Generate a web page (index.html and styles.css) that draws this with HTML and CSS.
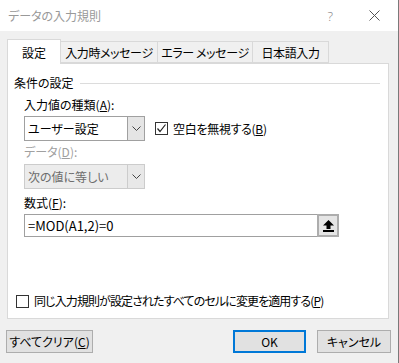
FILE: index.html
```html
<!DOCTYPE html>
<html lang="ja">
<head>
  <meta charset="UTF-8" />
  <title>データの入力規則</title>
  <link rel="stylesheet" href="styles.css">
</head>
<body>
<div class="window">
  <div class="titlebar">
    <span class="title">データの入力規則</span>
    <span class="help">?</span>
    <span class="close">
      <svg width="11" height="11" viewBox="0 0 11 11"><path d="M0.5 0.5 L10.5 10.5 M10.5 0.5 L0.5 10.5" stroke="#555" stroke-width="1" fill="none"/></svg>
    </span>
  </div>

  <div class="tabs">
    <div class="tab active" style="width:54px">設定</div>
    <div class="tab" style="width:97px">入力時メッセージ</div>
    <div class="tab" style="width:95px">エラー メッセージ</div>
    <div class="tab" style="width:76px">日本語入力</div>
  </div>

  <div class="panel">
    <div class="group-head">
      <span>条件の設定</span>
      <span class="rule"></span>
    </div>

    <div class="label">入力値の種類(<u>A</u>):</div>
    <div class="row">
      <div class="select">
        <span class="value">ユーザー設定</span>
        <span class="arrow"><svg width="9" height="5" viewBox="0 0 9 5"><path d="M0.5 0.5 L4.5 4.5 L8.5 0.5" stroke="#444" fill="none"/></svg></span>
      </div>
      <label class="check">
        <span class="box"><svg width="11" height="11" viewBox="0 0 11 11"><path d="M1.5 5.5 L4 8.5 L9.5 1.5" stroke="#222" stroke-width="1.2" fill="none"/></svg></span>
        空白を無視する(<u>B</u>)
      </label>
    </div>

    <div class="label disabled">データ(<u>D</u>):</div>
    <div class="row">
      <div class="select off">
        <span class="value">次の値に等しい</span>
        <span class="arrow"><svg width="9" height="5" viewBox="0 0 9 5"><path d="M0.5 0.5 L4.5 4.5 L8.5 0.5" stroke="#444" fill="none"/></svg></span>
      </div>
    </div>

    <div class="label">数式(<u>F</u>):</div>
    <div class="row">
      <div class="formula">=MOD(A1,2)=0</div>
      <div class="pick">
        <svg width="11" height="12" viewBox="0 0 11 12"><path d="M5.5 0 L11 5.5 L7.5 5.5 L7.5 9 L3.5 9 L3.5 5.5 L0 5.5 Z" fill="#000"/><rect x="0" y="10" width="11" height="2" fill="#000"/></svg>
      </div>
    </div>

    <label class="check bottom">
      <span class="box"></span>
      <span class="tight">同じ入力規則が設定されたすべてのセルに変更を適用する(<u>P</u>)</span>
    </label>
  </div>

  <div class="buttons">
    <button class="btn clear">すべてクリア(<u>C</u>)</button>
    <span class="spacer"></span>
    <button class="btn ok">OK</button>
    <button class="btn cancel">キャンセル</button>
  </div>
</div>
</body>
</html>
```

FILE: styles.css
```css
body {
  margin: 0;
  font-family: "Noto Sans CJK JP", "Noto Sans", sans-serif;
  font-feature-settings: "palt";
  font-size: 12px;
  color: #000;
  background-color: #f0f0f0;
}
.window {
  width: 398px;
  height: 363px;
  border-right: 1px solid #7a7a7a;
  background-color: #f0f0f0;
}
.titlebar {
  height: 31px;
  background-color: #fff;
  display: flex;
  align-items: center;
  padding-left: 8px;
}
.title {
  color: #999;
  flex: 1;
}
.help {
  color: #888;
  font-family: "Noto Sans", sans-serif;
  font-weight: 300;
  font-size: 13px;
  margin-right: 36px;
}
.close {
  display: flex;
  margin-right: 18px;
}
.tabs {
  display: flex;
  align-items: flex-end;
  padding: 8px 0 0 7px;
  height: 24px;
  position: relative;
  z-index: 1;
}
.tab {
  height: 22px;
  line-height: 21px;
  text-align: center;
  box-sizing: border-box;
  border: 1px solid #d9d9d9;
  border-left: none;
  background-color: #f0f0f0;
  white-space: nowrap;
  letter-spacing: -0.4px;
}
.tab.active {
  height: 25px;
  line-height: 25px;
  margin-bottom: -1px;
  background-color: #fff;
  border-left: 1px solid #d9d9d9;
  border-bottom: none;
  letter-spacing: 0;
}
.panel {
  margin: 0 9px 0 7px;
  height: 256px;
  box-sizing: border-box;
  border: 1px solid #d9d9d9;
  background-color: #fff;
  display: flex;
  flex-direction: column;
  padding: 11px 8px 9px 6px;
}
.group-head {
  display: flex;
  align-items: center;
  height: 16px;
  line-height: 16px;
}
.rule {
  flex: 1;
  border-top: 1px solid #dcdcdc;
  margin-left: 6px;
  margin-top: 1px;
}
.label {
  margin: 6px 0 0 10px;
  line-height: 16px;
}
.label.disabled {
  color: #a0a0a0;
  margin-top: 3px;
}
.row {
  display: flex;
  align-items: center;
  margin: 3px 0 0 10px;
}
.select {
  width: 121px;
  height: 25px;
  box-sizing: border-box;
  border: 1px solid #a0a0a0;
  display: flex;
  background-color: #fff;
}
.select .value {
  flex: 1;
  line-height: 23px;
  padding-left: 3px;
}
.select .arrow {
  width: 16px;
  background-color: #e5e5e5;
  border-left: 1px solid #a0a0a0;
  display: flex;
  align-items: center;
  justify-content: center;
}
.select.off {
  background-color: #ececec;
  border-color: #cccccc;
  color: #6d6d6d;
  margin-top: 1px;
}
.select.off .arrow {
  border-left-color: #cccccc;
  background-color: #e8e8e8;
}
.check {
  display: flex;
  align-items: center;
  margin-left: 10px;
  line-height: 16px;
  letter-spacing: -0.3px;
}
.box {
  width: 11px;
  height: 11px;
  border: 1px solid #333;
  background-color: #fff;
  margin-right: 5px;
  display: flex;
}
.tight {
  letter-spacing: -0.9px;
}
.formula {
  width: 293px;
  height: 23px;
  box-sizing: border-box;
  border: 1px solid #a0a0a0;
  border-right: none;
  font-size: 13px;
  line-height: 21px;
  padding-left: 3px;
}
.pick {
  width: 22px;
  height: 23px;
  box-sizing: border-box;
  border: 2px solid #adadad;
  background-color: #e5e5e5;
  display: flex;
  align-items: center;
  justify-content: center;
}
.check.bottom {
  margin: auto 0 0 2px;
}
.buttons {
  display: flex;
  padding: 11px 0 0 6px;
}
.spacer {
  flex: 1;
}
.btn {
  height: 23px;
  box-sizing: border-box;
  background-color: #e1e1e1;
  border: 1px solid #adadad;
  font-family: inherit;
  font-feature-settings: "palt";
  font-size: 12px;
  padding: 0;
  color: #000;
}
.btn.clear {
  width: 87px;
}
.btn.ok {
  width: 73px;
  border: 2px solid #0078d7;
  margin-right: 11px;
}
.btn.cancel {
  width: 74px;
  margin-right: 7px;
}
```
